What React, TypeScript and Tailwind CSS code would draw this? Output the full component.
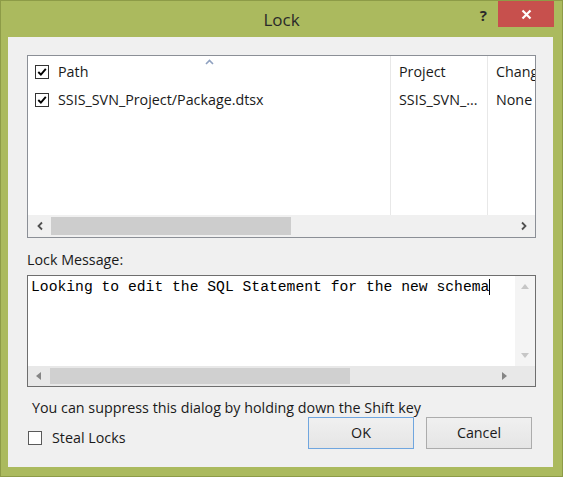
import React from "react";

const CheckBox = ({ checked, border = "border-[#333333]" }: { checked: boolean; border?: string }) => (
  <span className={`flex h-[14px] w-[14px] shrink-0 items-center justify-center border bg-white ${border}`}>
    {checked && (
      <svg width="10" height="10" viewBox="0 0 10 10">
        <path d="M1.3 5 L3.9 7.7 L8.8 1.9" stroke="#000" strokeWidth="1.9" fill="none" />
      </svg>
    )}
  </span>
);

const Chevron = ({ dir }: { dir: "left" | "right" }) => (
  <svg width="8" height="10" viewBox="0 0 8 10">
    <path
      d={dir === "left" ? "M6 1.5 L2.5 5 L6 8.5" : "M2 1.5 L5.5 5 L2 8.5"}
      stroke="#505050"
      strokeWidth="1.8"
      fill="none"
    />
  </svg>
);

const Tri = ({ dir, color }: { dir: "up" | "down" | "left" | "right"; color: string }) => {
  const d = {
    up: "M1 7 L5 2 L9 7 Z",
    down: "M1 3 L5 8 L9 3 Z",
    left: "M7 1 L2 5 L7 9 Z",
    right: "M3 1 L8 5 L3 9 Z",
  }[dir];
  return (
    <svg width="10" height="10" viewBox="0 0 10 10">
      <path d={d} fill={color} />
    </svg>
  );
};

export default function App() {
  return (
    <div className="flex h-[477px] w-[563px] flex-col border border-[#8d9b47] bg-[#abba5e] font-['Open_Sans',sans-serif] text-[14.3px] text-[#1a1a1a]">
      {/* Title bar */}
      <div className="relative flex h-[36px] shrink-0 items-center justify-center">
        <span className="pt-[1px] text-[17px] text-[#2a2a2a]">Lock</span>
        <span className="absolute right-[75px] top-[3px] text-[15px] font-bold text-[#2a2a2a]">?</span>
        <div className="absolute right-[8px] top-0 flex h-[26px] w-[56px] items-center justify-center bg-[#c7504d]">
          <svg width="11" height="11" viewBox="0 0 11 11">
            <path d="M1.5 1.5 L9.5 9.5 M9.5 1.5 L1.5 9.5" stroke="#fff" strokeWidth="2.2" />
          </svg>
        </div>
      </div>

      {/* Client area */}
      <div className="mb-[9px] ml-[7px] mr-[9px] flex flex-1 flex-col bg-[#f0f0f0] pl-[19px] pr-[17px] pt-[18px]">
        {/* File list */}
        <div className="flex h-[183px] flex-col border border-[#8b8f96] bg-white">
          <div className="flex flex-1 overflow-hidden">
            <div className="relative flex w-[363px] shrink-0 flex-col border-r border-[#e8e8e8]">
              <svg className="absolute left-[177px] top-[3px]" width="9" height="6" viewBox="0 0 9 6">
                <path d="M1 5 L4.5 1.5 L8 5" stroke="#8fa1c0" strokeWidth="1.6" fill="none" />
              </svg>
              <div className="flex h-[31px] items-center gap-[9px] pl-[7px]">
                <CheckBox checked />
                <span>Path</span>
              </div>
              <div className="flex h-[26px] items-center gap-[9px] pl-[7px]">
                <CheckBox checked />
                <span>SSIS_SVN_Project/Package.dtsx</span>
              </div>
            </div>
            <div className="flex w-[97px] shrink-0 flex-col border-r border-[#e8e8e8]">
              <div className="flex h-[31px] items-center pl-[8px]">Project</div>
              <div className="flex h-[26px] items-center pl-[8px]">SSIS_SVN_...</div>
            </div>
            <div className="flex flex-1 flex-col overflow-hidden whitespace-nowrap">
              <div className="flex h-[31px] items-center pl-[8px]">Changes</div>
              <div className="flex h-[26px] items-center pl-[8px]">None</div>
            </div>
          </div>
          <div className="flex h-[22px] items-center bg-[#f0f0f0]">
            <div className="flex w-[23px] justify-center">
              <Chevron dir="left" />
            </div>
            <div className="h-[18px] w-[240px] bg-[#cdcdcd]" />
            <div className="flex-1" />
            <div className="flex w-[23px] justify-center">
              <Chevron dir="right" />
            </div>
          </div>
        </div>

        <div className="mt-[13px] h-[18px] leading-[18px]">Lock Message:</div>

        {/* Message box */}
        <div className="mt-[6px] grid h-[112px] grid-cols-[1fr_20px] grid-rows-[1fr_20px] border border-[#6e6e6e] bg-white">
          <div className="flex items-start pl-[3px] pt-[2px] font-['Liberation_Mono',monospace] text-[14.7px] leading-[18px] text-black">
            <span>Looking to edit the SQL Statement for the new schema</span>
            <span className="mt-[1px] h-[16px] w-[1px] bg-black" />
          </div>
          <div className="flex flex-col items-center justify-between bg-[#f4f4f4] py-[6px]">
            <Tri dir="up" color="#c6c6c6" />
            <Tri dir="down" color="#c6c6c6" />
          </div>
          <div className="flex items-center bg-[#e8e8e8]">
            <div className="flex w-[22px] justify-center">
              <Tri dir="left" color="#858585" />
            </div>
            <div className="h-[16px] w-[300px] bg-[#d0d0d0]" />
            <div className="flex-1" />
            <div className="flex w-[22px] justify-center">
              <Tri dir="right" color="#858585" />
            </div>
          </div>
          <div className="bg-[#e8e8e8]" />
        </div>

        <div className="ml-[5px] mt-[12px] h-[18px] leading-[18px]">
          You can suppress this dialog by holding down the Shift key
        </div>

        <div className="flex items-start justify-between pr-[4px]">
          <label className="ml-[1px] mt-[14px] flex items-center gap-[10px]">
            <CheckBox checked={false} border="border-[#5a5a5a]" />
            <span className="leading-[14px]">Steal Locks</span>
          </label>
          <div className="flex gap-[12px]">
            <button className="flex h-[32px] w-[106px] items-center justify-center border border-[#70a6df] bg-gradient-to-b from-[#f0f0f0] to-[#e5e5e5]">
              OK
            </button>
            <button className="flex h-[32px] w-[106px] items-center justify-center border border-[#acacac] bg-gradient-to-b from-[#f0f0f0] to-[#e5e5e5]">
              Cancel
            </button>
          </div>
        </div>
      </div>
    </div>
  );
}
